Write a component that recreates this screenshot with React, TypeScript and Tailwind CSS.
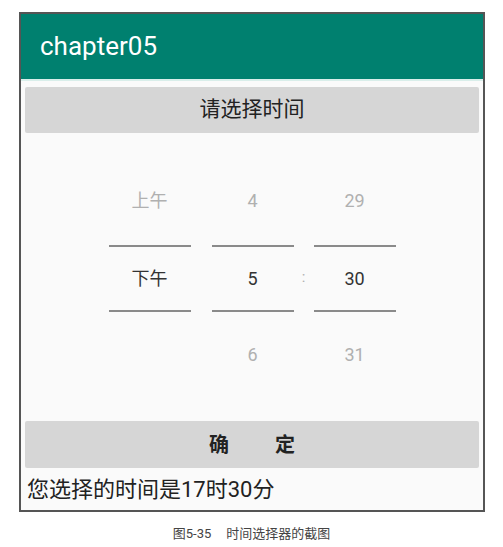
const font = { fontFamily: 'Roboto, "Noto Sans CJK SC", sans-serif' };

const PickerColumn = ({ prev, current, next }: { prev: string; current: string; next: string }) => (
  <div className="flex w-[82px] flex-col items-center">
    <div className="flex h-[88px] items-center text-[18px] text-[#b0b0b0]">{prev}</div>
    <div className="h-[2px] w-full bg-[#8a8a8a]" />
    <div className="flex h-[63px] items-center text-[18px] text-[#333]">{current}</div>
    <div className="h-[2px] w-full bg-[#8a8a8a]" />
    <div className="flex h-[86px] items-center text-[18px] text-[#b0b0b0]">{next}</div>
  </div>
);

export default function App() {
  return (
    <div className="h-[547px] w-[503px] bg-white" style={font}>
      <div className="h-[12px]" />
      <div className="ml-[19px] flex h-[500px] w-[466px] flex-col border-2 border-[#555] bg-[#fafafa]">
        <div className="flex h-[66px] items-center bg-[#00806f] pl-[19px] text-[26px] text-white">chapter05</div>
        <div className="h-[2px] bg-[#d9eeea]" />
        <div className="flex flex-col px-[4px] pt-[6px]">
          <div className="flex h-[46px] items-center justify-center rounded-[2px] bg-[#d6d6d6] text-[21px] text-[#222]">
            请选择时间
          </div>
          <div className="flex h-[288px] items-center justify-center gap-[21px]">
            <PickerColumn prev="上午" current="下午" next="" />
            <div className="flex items-center gap-[6px]">
              <PickerColumn prev="4" current="5" next="6" />
              <span className="w-[8px] text-center text-[15px] text-[#b0b0b0]">:</span>
              <PickerColumn prev="29" current="30" next="31" />
            </div>
          </div>
          <div className="flex h-[47px] items-center justify-center rounded-[2px] bg-[#d6d6d6] text-[20px] font-bold text-[#222]">
            <span>确</span>
            <span className="ml-[46px]">定</span>
          </div>
          <div className="flex h-[42px] items-center pl-[2px] text-[22px] text-[#222]">您选择的时间是17时30分</div>
        </div>
      </div>
      <div className="flex h-[44px] items-center justify-center text-[13px] text-[#444]">
        <span>图5-35</span>
        <span className="ml-[15px]">时间选择器的截图</span>
      </div>
    </div>
  );
}
